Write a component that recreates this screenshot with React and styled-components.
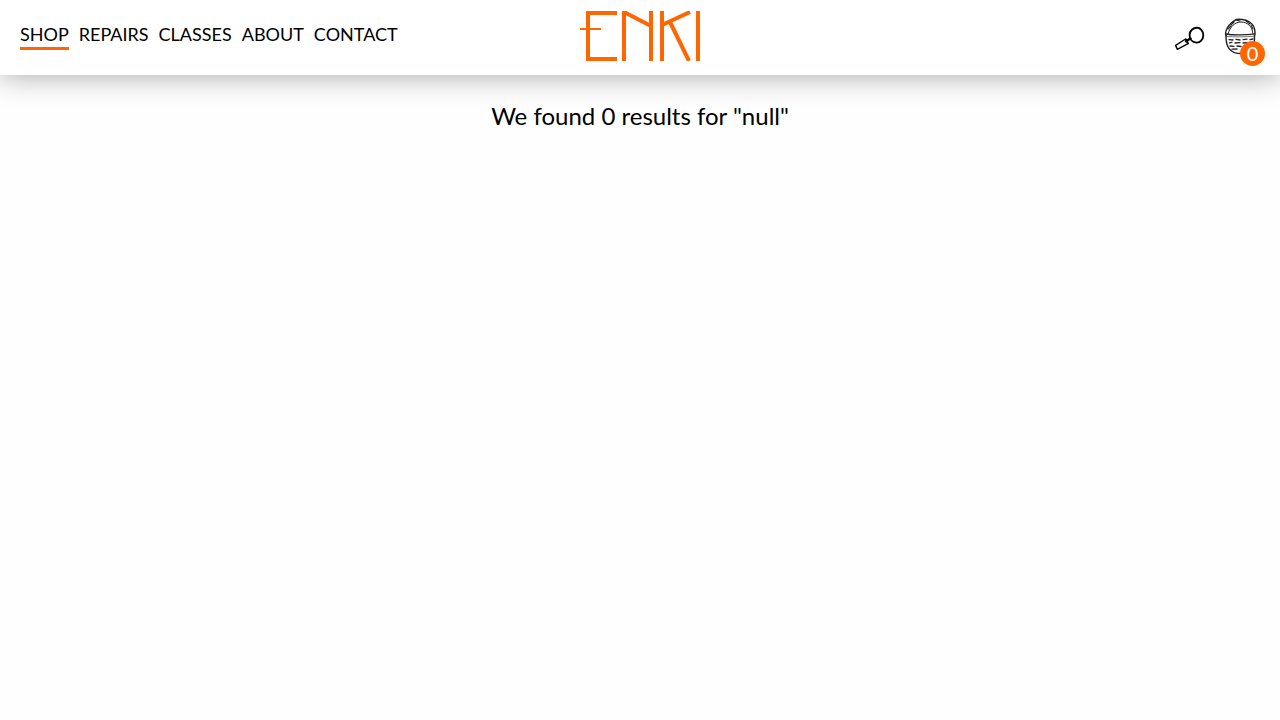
import React from "react";
import styled, { createGlobalStyle } from "styled-components";

const GlobalStyle = createGlobalStyle`
  *, *::before, *::after { box-sizing: border-box; }
  body {
    margin: 0;
    background: #fefefe;
    color: #000;
    font-family: Lato, "Liberation Sans", sans-serif;
  }
`;

const Header = styled.header`
  display: grid;
  grid-template-columns: 1fr auto 1fr;
  align-items: center;
  height: 75px;
  padding: 0 20px;
  background: #fff;
  box-shadow: 0 0 30px rgba(0, 10, 8, 0.38);
`;

const Nav = styled.nav`
  display: flex;
  align-items: center;
  gap: 10px;
  padding-bottom: 6px;
`;

const NavLink = styled.a`
  padding: 2px 0 1px;
  border-bottom: 3px solid ${(p) => (p.$active ? "#ff6600" : "transparent")};
  color: #000;
  font-size: 18px;
  line-height: 24px;
  text-decoration: none;
`;

const LogoLink = styled.a`
  display: block;
  height: 50px;
  margin-bottom: 3px;
`;

const Actions = styled.div`
  display: flex;
  justify-content: flex-end;
  align-items: center;
  gap: 16px;
`;

const IconButton = styled.button`
  position: relative;
  display: block;
  width: 36px;
  height: 40px;
  padding: 0;
  border: 0;
  background: none;
  font-family: inherit;
  cursor: pointer;
`;

const Badge = styled.span`
  position: absolute;
  right: -5px;
  bottom: -8px;
  width: 25px;
  height: 25px;
  border-radius: 50%;
  background: #ff6600;
  color: #fff;
  font-size: 20px;
  line-height: 25px;
  text-align: center;
`;

const Main = styled.main`
  padding: 23px 20px;
`;

const ResultsTitle = styled.h1`
  margin: 0;
  font-size: 24px;
  font-weight: 400;
  line-height: 36px;
  text-align: center;
`;

const links = ["SHOP", "REPAIRS", "CLASSES", "ABOUT", "CONTACT"];

const Logo = () => (
  <svg width="120" height="50" viewBox="0 0 120 50" fill="none" stroke="#ff6600" strokeWidth="4" aria-hidden="true">
    <path d="M37 2H8V48H37" />
    <path d="M0 18H21" strokeWidth="2" />
    <path d="M44 50V1L71 15M71 0V50" />
    <path d="M82 0V50M82 14L110 1M90 11L109 50" />
    <path d="M118 0V50" />
  </svg>
);

const SearchIcon = () => (
  <svg width="36" height="40" viewBox="0 0 36 40" fill="none" stroke="#080808" strokeLinecap="round" strokeLinejoin="round" aria-hidden="true">
    <path d="M25 9.8C28 9.5 31.4 13 31.3 17.2C31.2 21.6 28 24.9 24.5 24.6C20.2 24.1 17.4 20.9 17.6 16.7C17.8 12.7 21 9.7 25 9.8Z" strokeWidth="1.9" />
    <path d="M18.4 20.5L14 23.2" strokeWidth="2.5" />
    <path d="M13.6 21L3.6 27.4L5.3 31.3L16 25.6Z" strokeWidth="1.4" />
    <path d="M14 21.5L16 25.4" strokeWidth="1.8" />
  </svg>
);

const BasketIcon = () => (
  <svg width="36" height="40" viewBox="0 0 36 40" fill="none" stroke="#222" strokeLinecap="round" strokeLinejoin="round" aria-hidden="true">
    <path d="M1.8 17C.8 13 4 6 12.5 1.4C22 .6 32.5 4.5 30.8 17" strokeWidth="1.4" />
    <path d="M4 15.8C6.2 8.3 11.2 4 17 4C23.8 4.1 28.3 8.6 28.8 15.2" strokeWidth="1" />
    <path d="M4 11L7 8M7 7L10 4M12 2L16 3M22 3L26 6M27 7L29 11" strokeWidth="1.1" />
    <path d="M2 16C9 17.4 23 17.2 30.8 15.8" strokeWidth="1.3" />
    <path d="M2 18.4C10 19.2 22 19 30.4 18.2" strokeWidth="1" stroke="#777" />
    <path d="M2 17C2 27 4 32 10.5 34.6C16 36 22 35.6 26 32.6C29.5 29 31 24.5 30.5 17" strokeWidth="1.4" />
    <path d="M5 21.6L9 22M12 21.4L16 22M19 21.6L23 21.2M26 21.6L29 21M5.5 24.8L8 24.4M11 25L16 24.6M19 25L24 24.6M6 28L10 28.3M13 28L17 28.5M8 31.2L13 31" strokeWidth="1.3" />
  </svg>
);

export default function App() {
  return (
    <>
      <GlobalStyle />
      <Header>
        <Nav aria-label="Main">
          {links.map((label) => (
            <NavLink key={label} href="#" $active={label === "SHOP"}>{label}</NavLink>
          ))}
        </Nav>
        <LogoLink href="#" aria-label="Enki home"><Logo /></LogoLink>
        <Actions>
          <IconButton type="button" aria-label="Search"><SearchIcon /></IconButton>
          <IconButton type="button" aria-label="Basket">
            <BasketIcon />
            <Badge>0</Badge>
          </IconButton>
        </Actions>
      </Header>
      <Main>
        <ResultsTitle>We found 0 results for "null"</ResultsTitle>
      </Main>
    </>
  );
}
